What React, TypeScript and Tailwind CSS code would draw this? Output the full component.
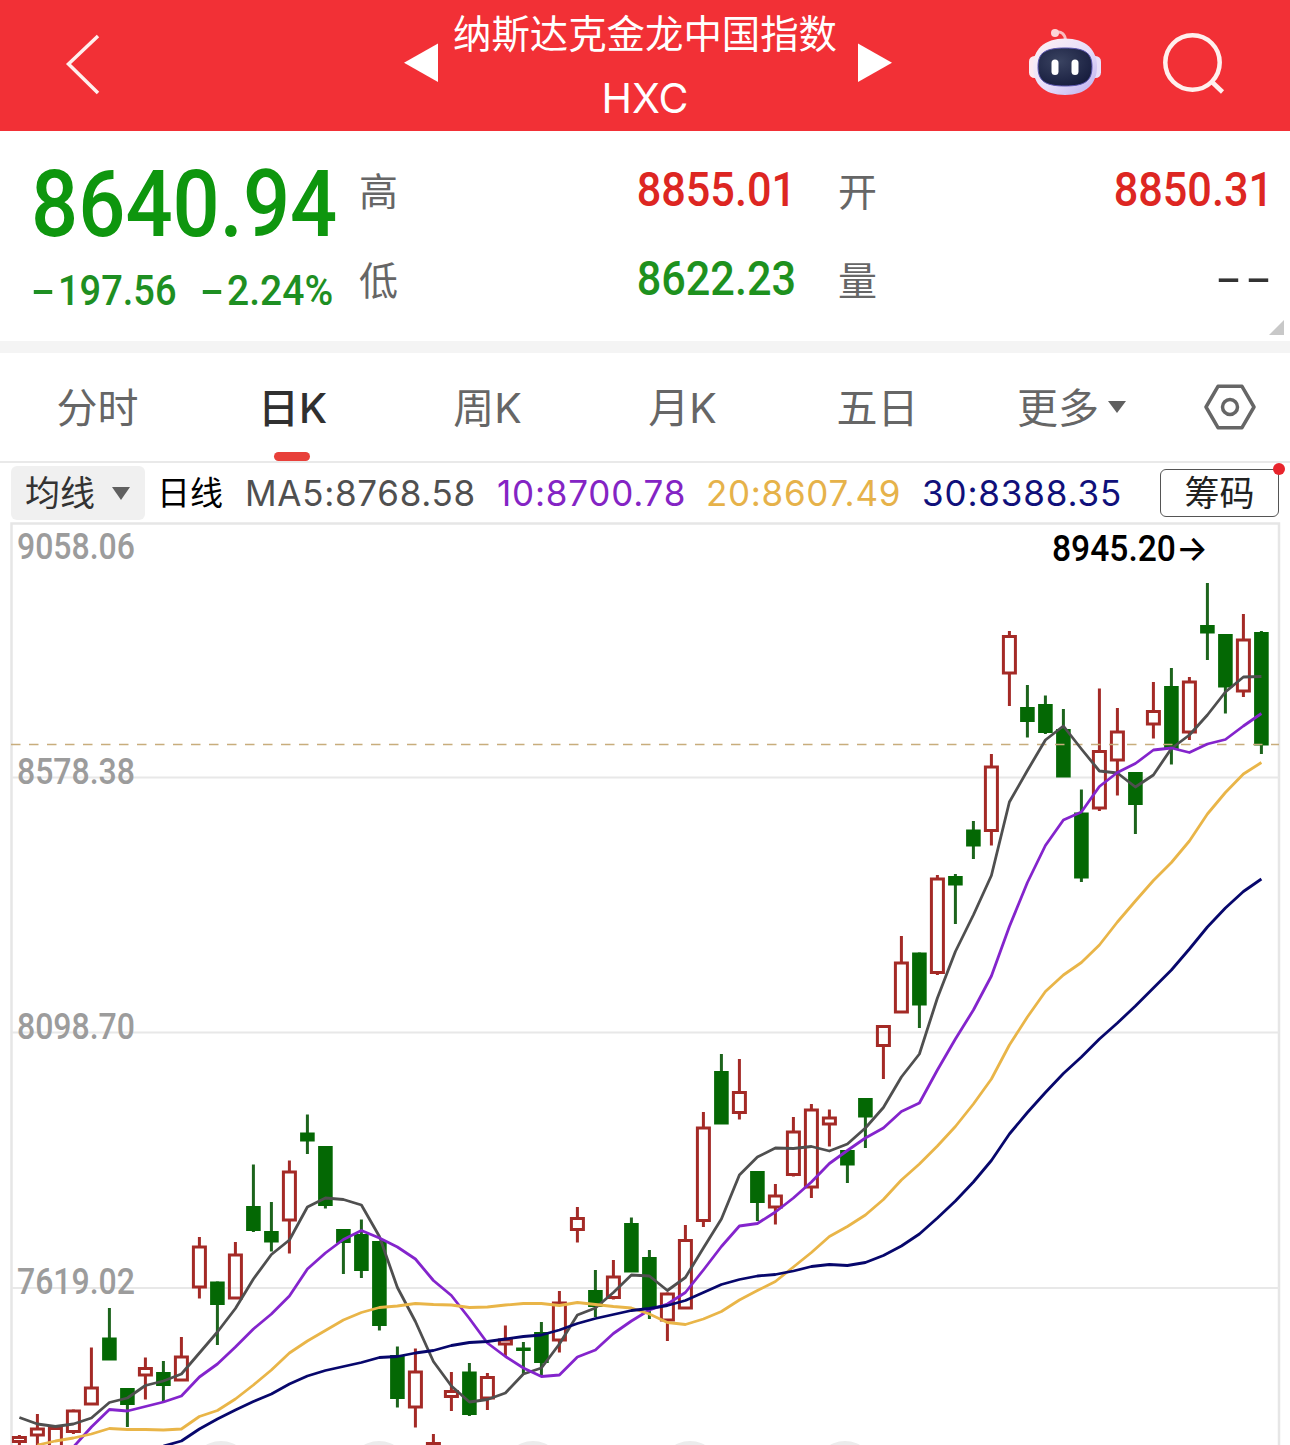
import clsx from "clsx";

type Candle = [top: number, bottom: number, high: number, low: number, up: 0 | 1];

// [body top, body bottom, wick top, wick bottom, rising]
const candles: Candle[] = [
  [1436, 1443, 1435, 1446, 1], [1427.5, 1436.5, 1414, 1446, 1], [1427, 1452, 1427, 1452, 1],
  [1409.5, 1433, 1409.5, 1434, 1], [1386.5, 1405.5, 1347.5, 1405, 1], [1337.5, 1360.5, 1308, 1360, 0],
  [1388, 1405, 1388, 1427, 0], [1367, 1376.5, 1357.5, 1399.5, 1], [1372, 1386, 1361, 1402, 0],
  [1355.5, 1381.5, 1337, 1381, 1], [1245.5, 1288.5, 1237, 1298.5, 1], [1281.5, 1305, 1281.5, 1345, 0],
  [1253.5, 1299.5, 1242, 1299, 1], [1206, 1231, 1164.5, 1232, 0], [1231, 1242.5, 1202, 1251.5, 0],
  [1170.5, 1221.5, 1160.5, 1253.5, 1], [1132.5, 1141.5, 1114.5, 1154, 0], [1146, 1206, 1146, 1208.5, 0],
  [1229, 1243, 1229, 1274, 0], [1234, 1271, 1219.5, 1278, 0], [1241, 1326, 1241, 1330.5, 0],
  [1355, 1399, 1346.5, 1407.5, 0], [1370.5, 1408.5, 1348.5, 1427.5, 1], [1442, 1452, 1434, 1452, 1],
  [1390, 1398, 1372, 1411, 1], [1371.5, 1415, 1363, 1416, 0], [1376, 1399.5, 1373, 1410, 1],
  [1338.5, 1345.5, 1325.5, 1356, 1], [1347.5, 1351, 1342, 1374, 0], [1332, 1363, 1322, 1376.5, 0],
  [1301.5, 1341.5, 1291, 1352.5, 1], [1217, 1231, 1207, 1242.5, 1], [1290, 1307, 1270, 1317, 0],
  [1275.5, 1299, 1260, 1299.5, 1], [1223, 1272.5, 1217.5, 1272, 0], [1257, 1309, 1250, 1319, 0],
  [1292.5, 1321.5, 1292.5, 1341, 1], [1239, 1309.5, 1225, 1309, 1], [1126.5, 1222, 1112, 1227, 1],
  [1071, 1124.5, 1054, 1124, 0], [1091, 1114, 1059, 1119.5, 1], [1171, 1203, 1171, 1221, 0],
  [1194.5, 1208.5, 1184, 1224.5, 1], [1130.5, 1176, 1117, 1176.5, 1], [1108.5, 1188.5, 1104, 1198, 1],
  [1116.5, 1125.5, 1109.5, 1146.5, 1], [1150, 1165.5, 1150, 1183, 0], [1098, 1117.5, 1098, 1148, 0],
  [1025, 1047, 1025, 1079, 1], [961.5, 1013.5, 936, 1013, 1], [952.5, 1005.5, 952.5, 1028, 0],
  [877.5, 974, 875, 975, 1], [876, 885.5, 874, 924, 0], [829.5, 846.5, 821, 859, 0],
  [765.5, 832, 754, 845.5, 1], [635, 674.5, 631, 706, 1], [707, 722, 685, 737.5, 0],
  [704, 733, 695.5, 734, 0], [729, 777.5, 709, 777, 0], [812.5, 878.5, 789.5, 882, 0],
  [750, 809.5, 688.5, 811, 1], [730.5, 761.5, 708, 795.5, 1], [772, 805, 772, 834, 0],
  [710, 725.5, 682, 738.5, 1], [686, 749, 668, 764.5, 0], [680.5, 733.5, 677, 740, 1],
  [625, 633.5, 583, 660, 0], [634, 687.5, 634, 713.5, 0], [638.5, 692.5, 614, 697, 1],
  [632, 745.5, 631, 754, 0],
];

const averages = [
  {
    className: "stroke-[#4f4f4f]",
    start: 0,
    ys: [
      1417.5, 1424, 1426.5, 1424, 1418, 1402.5, 1398, 1385.5, 1381, 1374, 1353, 1332, 1308.5, 1279,
      1254.5, 1240, 1207, 1198, 1199.5, 1205, 1236.5, 1287.5, 1321.5, 1361.5, 1386, 1402, 1399.5,
      1393, 1374, 1368, 1344, 1315, 1308, 1292.5, 1275, 1276, 1290.5, 1277.5, 1248, 1219, 1175, 1157,
      1148, 1148.5, 1146.5, 1151, 1144, 1128, 1107.5, 1077, 1054, 998, 951.5, 915, 875.5, 802, 770.5,
      740, 726, 749, 771, 773, 787, 775, 748.5, 735, 715, 692, 677, 676.5,
    ],
  },
  {
    className: "stroke-[#8424cc]",
    start: 3,
    ys: [
      1447, 1427, 1409.5, 1411, 1406.5, 1402, 1396, 1377, 1364, 1347, 1329, 1314, 1296, 1269, 1253,
      1239.5, 1230.5, 1238, 1247, 1259, 1280.5, 1295.5, 1318.5, 1343, 1356.5, 1368, 1376.5, 1375,
      1357, 1350, 1333.5, 1321, 1310, 1304, 1292.5, 1270, 1246.5, 1226, 1223.5, 1212, 1198, 1182,
      1163.5, 1150.5, 1138, 1128, 1111.5, 1103, 1070, 1039, 1010, 976, 926.5, 882.5, 845.5, 820, 812,
      786.5, 772.5, 763.5, 750, 748, 752.5, 744, 739.5, 726, 713.5,
    ],
  },
  {
    className: "stroke-[#e9b548]",
    start: 1,
    ys: [
      1445, 1441, 1438, 1434, 1428.5, 1429.5, 1429.5, 1430, 1429, 1416.5, 1410.5, 1399, 1385, 1370,
      1353, 1341, 1330.5, 1320, 1312.5, 1307.5, 1306, 1303.5, 1304.5, 1305, 1307.5, 1307, 1305,
      1303.5, 1303.5, 1305.5, 1302.5, 1304.5, 1306.5, 1308, 1314, 1322.5, 1324.5, 1319, 1311.5, 1300,
      1290.5, 1281.5, 1267, 1252.5, 1236.5, 1226.5, 1215, 1199.5, 1180, 1164, 1146, 1126.5, 1104,
      1079, 1045, 1017, 991.5, 975, 962.5, 945, 922, 901, 880.5, 862.5, 841, 814, 792.5, 774, 762.5,
    ],
  },
  {
    className: "stroke-[#07076c]",
    start: 8,
    ys: [
      1446, 1441, 1429, 1419, 1410, 1401.5, 1394, 1384, 1376, 1370.5, 1366.5, 1362.5, 1357.5, 1356.5,
      1353, 1350.5, 1345.5, 1342.5, 1341.5, 1339, 1336.5, 1335, 1330, 1323.5, 1318.5, 1314.5, 1310.5,
      1308.5, 1305.5, 1300.5, 1292.5, 1284.5, 1279.5, 1276, 1274.5, 1271, 1266.5, 1264.5, 1265.5,
      1262.5, 1255.5, 1246, 1234, 1218, 1201, 1182, 1160.5, 1134, 1112.5, 1092.5, 1073.5, 1057,
      1039, 1023, 1006, 988, 970, 949, 927, 908, 891.5, 879,
    ],
  },
];

const axisLabels = [
  { text: "9058.06", y: 558.5 },
  { text: "8578.38", y: 783.5 },
  { text: "8098.70", y: 1038.5 },
  { text: "7619.02", y: 1293.5 },
];

const tabs = ["分时", "日K", "周K", "月K", "五日"];

const candleX = (i: number) => 19.4 + i * 18;

function Robot() {
  return (
    <svg className="h-[68px] w-[74px]" viewBox="1028 28 74 68" fill="none">
      <defs>
        <linearGradient id="shell" x1="0" y1="0" x2="1" y2="1">
          <stop offset="0" stopColor="#fff3f4" />
          <stop offset="0.55" stopColor="#e6ddfa" />
          <stop offset="0.85" stopColor="#c9bdf2" />
          <stop offset="1" stopColor="#f6d3e0" />
        </linearGradient>
        <radialGradient id="visor" cx="0.4" cy="0.35" r="0.7">
          <stop offset="0" stopColor="#3a4361" />
          <stop offset="1" stopColor="#171d3e" />
        </radialGradient>
      </defs>
      <path d="M1056 32.5C1061 31 1065 34 1065.500 40" stroke="#f9bcc0" strokeWidth="3" />
      <circle cx="1055" cy="33" r="4" fill="#fcd5d7" />
      <rect x="1029" y="56" width="12" height="22" rx="5.500" fill="#fbe9f1" />
      <rect x="1089" y="56" width="12" height="22" rx="5.500" fill="#e9dffa" />
      <path
        d="M1065 38.500C1086 38.500 1097 50 1097 66.500C1097 84 1086 95 1065 95C1044 95 1033 84 1033 66.500C1033 50 1044 38.500 1065 38.500Z"
        fill="url(#shell)"
      />
      <path
        d="M1065 48C1085 48 1092 53 1092 66.500C1092 81 1085 86 1065 86C1045 86 1038 81 1038 66.500C1038 53 1045 48 1065 48Z"
        fill="url(#visor)"
        stroke="#5a55b0"
      />
      <rect x="1051.500" y="59.500" width="7" height="15.500" rx="3.500" fill="#fff" />
      <rect x="1071.500" y="59.500" width="7" height="15.500" rx="3.500" fill="#fff" />
    </svg>
  );
}

function Header() {
  return (
    <header className="flex h-[131px] bg-[#f23036] text-white">
      <div className="w-[404px] pt-[31px] pl-[62px]">
        <svg className="h-[66px] w-[42px]" viewBox="62 31 42 66" fill="none">
          <path d="M98 36L68.500 64L98 93" stroke="#fff0ee" strokeWidth="3.5" />
        </svg>
      </div>
      <svg className="mt-[43px] h-10 w-[34px]" viewBox="0 0 34 40">
        <path d="M34 0.500V39L0 19.700Z" fill="#fff" />
      </svg>
      <div className="flex w-[420px] flex-col items-center">
        <div className="mt-[10px] mr-[6px] h-[48px] text-[38.4px] leading-[48px] whitespace-nowrap">
          纳斯达克金龙中国指数
        </div>
        <div className="mt-[15px] mr-[6px] text-[41px] leading-[50px]">HXC</div>
      </div>
      <svg className="mt-[43px] h-10 w-[34px]" viewBox="0 0 34 40">
        <path d="M0 0.500V39L34 19.700Z" fill="#fff" />
      </svg>
      <div className="mt-7 ml-[136px]">
        <Robot />
      </div>
      <svg className="mt-[28px] ml-[58px] h-[70px] w-[68px]" viewBox="1160 28 68 70" fill="none">
        <circle cx="1192.500" cy="62.500" r="27.200" stroke="#fff0ee" strokeWidth="4.500" />
        <path d="M1211.500 81.500L1222.500 92" stroke="#fff0ee" strokeWidth="4.500" />
      </svg>
    </header>
  );
}

type StatProps = { label: string; value: string; className: string };

function Stat({ label, value, className }: StatProps) {
  return (
    <div className="flex h-[89px] justify-between">
      <span className="text-[39px] leading-[58px] text-[#666]">{label}</span>
      <span
        className={clsx(
          "origin-right font-['Roboto'] text-[48px]",
          value === "--"
            ? "-mr-[5px] scale-x-[1.7] leading-[53px] tracking-[4.5px]"
            : "scale-x-[0.9] leading-[54px] font-medium",
          className
        )}
      >
        {value}
      </span>
    </div>
  );
}

function Quote() {
  return (
    <section className="relative flex h-[210px] pt-[32px]">
      <div className="w-[359px] pl-[31px] font-['Roboto'] font-medium whitespace-nowrap">
        <div className="h-[84px] w-[338px] origin-left scale-x-[0.893] text-[93px] leading-[84px] text-[#0e960e]">
          8640.94
        </div>
        <div className="mt-[14px] flex text-[42px] leading-[59px] text-[#1e8f22]">
          <div className="w-[169px]">
            <span className="inline-block w-[27px] origin-left scale-x-[1.7]">-</span>
            <span className="inline-block origin-left scale-x-[0.905]">197.56</span>
          </div>
          <div>
            <span className="inline-block w-[27px] origin-left scale-x-[1.7]">-</span>
            <span className="inline-block origin-left scale-x-[0.93]">2.24%</span>
          </div>
        </div>
      </div>
      <div className="w-[437px]">
        <Stat label="高" value="8855.01" className="text-[#dd2622]" />
        <Stat label="低" value="8622.23" className="text-[#1e911e]" />
      </div>
      <div className="ml-[42px] w-[435px]">
        <Stat label="开" value="8850.31" className="text-[#dd2622]" />
        <Stat label="量" value="--" className="text-[#333]" />
      </div>
      <svg className="absolute right-[6px] bottom-[6px] h-[15px] w-[15px]" viewBox="0 0 15 15">
        <path d="M15 0V15H0Z" fill="#c8c8c8" />
      </svg>
    </section>
  );
}

function Tabs() {
  return (
    <nav className="flex h-[110px] border-b-2 border-[#e9e9e9] text-[41px] leading-[110px] text-[#666]">
      {tabs.map((tab) => (
        <div
          key={tab}
          className={clsx(
            "relative flex w-[195px] justify-center",
            tab === "日K" && "font-medium text-[#303030]"
          )}
        >
          {tab}
          {tab === "日K" && (
            <span className="absolute bottom-0 left-[79px] h-[9px] w-9 rounded-full bg-[#e8403a]" />
          )}
        </div>
      ))}
      <div className="ml-[42px] flex w-[187px] items-center gap-[9px]">
        <span className="pt-[2px]">更多</span>
        <svg className="h-3 w-[18px]" viewBox="0 0 18 12">
          <path d="M0 0H18L9 12Z" fill="#606060" />
        </svg>
      </div>
      <svg className="mt-[30px] h-12 w-[52px]" viewBox="0 0 52 48" fill="none" stroke="#666">
        <path d="M14 3.300H38L50 24L38 44.700H14L2 24Z" strokeWidth="3.500" strokeLinejoin="round" />
        <circle cx="26" cy="24" r="7.500" strokeWidth="3.500" />
      </svg>
    </nav>
  );
}

function Legend() {
  return (
    <div className="flex h-[59px] pt-[3px] text-[35px] leading-[54px] whitespace-nowrap">
      <div className="ml-[11px] flex h-[54px] w-[134px] items-center gap-[17px] rounded-md bg-[#f0f0f0] pl-[14px] text-[#333]">
        均线
        <svg className="h-[13px] w-[18px]" viewBox="0 0 18 13">
          <path d="M0 0H18L9 13Z" fill="#606060" />
        </svg>
      </div>
      <span className="ml-[12px] w-[88px] text-[33px] text-black">日线</span>
      <span className="w-[252px] tracking-[0.7px] text-[#505050]">MA5:8768.58</span>
      <span className="w-[209px] tracking-[0.8px] text-[#8424c4]">10:8700.78</span>
      <span className="w-[216px] tracking-[0.7px] text-[#e6b24a]">20:8607.49</span>
      <span className="w-[238px] tracking-[0.85px] text-[#10107a]">30:8388.35</span>
      <div className="relative mt-[3px] h-[48px] w-[119px] rounded-md border-[1.5px] border-[#555] text-center leading-[46px] text-[#222]">
        筹码
        <span className="absolute -top-[7px] -right-[7px] size-3 rounded-full bg-[#e8242c]" />
      </div>
    </div>
  );
}

function Chart() {
  return (
    <svg className="h-[923px] w-[1290px]" viewBox="0 522 1290 923" fill="none">
      <rect x="11.500" y="523.500" width="1267.500" height="940" stroke="#e6e6e6" strokeWidth="2.500" />
      {[777.5, 1032.5, 1288].map((y) => (
        <path key={y} d={`M12 ${y}H1279`} stroke="#e8e8e8" strokeWidth="2" />
      ))}
      {[221, 379, 533, 690, 845].map((x) => (
        <circle key={x} cx={x} cy={1471} r="30" fill="#ececec" />
      ))}

      {candles.map(([top, bottom, high, low, up], i) => {
        const x = candleX(i);
        return up ? (
          <g key={i} stroke="#a42a26" strokeWidth="3">
            <path d={`M${x} ${high}V${top + 1}M${x} ${bottom - 1}V${low}`} />
            <rect x={x - 6} y={top + 1.5} width="12" height={bottom - top - 3} />
          </g>
        ) : (
          <g key={i}>
            <path d={`M${x} ${high}V${low}`} stroke="#1c641c" strokeWidth="3" />
            <rect x={x - 7.3} y={top} width="14.600" height={bottom - top} fill="#046804" />
          </g>
        );
      })}

      <path d="M11 744.500H1279" stroke="#c8ad7c" strokeWidth="1.500" strokeDasharray="9.500 8.500" />

      {averages.map(({ className, start, ys }) => (
        <polyline
          key={className}
          className={className}
          strokeWidth="2.8"
          strokeLinejoin="round"
          points={ys.map((y, i) => `${candleX(start + i)},${y}`).join(" ")}
        />
      ))}

      {axisLabels.map(({ text, y }) => (
        <text
          key={text}
          x="17"
          y={y}
          textLength="118"
          lengthAdjust="spacingAndGlyphs"
          className="fill-[#9c9c9c] font-['Roboto'] text-[36px] font-medium"
        >
          {text}
        </text>
      ))}
      <text
        x="1052"
        y="561"
        textLength="156"
        lengthAdjust="spacingAndGlyphs"
        className="fill-black font-['Roboto','Inter'] text-[36px] font-medium"
      >
        8945.20→
      </text>
    </svg>
  );
}

export default function App() {
  return (
    <main className="h-[1445px] w-[1290px] overflow-hidden bg-white font-['Inter','Noto_Sans_CJK_SC',sans-serif]">
      <Header />
      <Quote />
      <div className="h-3 bg-[#f4f4f4]" />
      <Tabs />
      <Legend />
      <Chart />
    </main>
  );
}
